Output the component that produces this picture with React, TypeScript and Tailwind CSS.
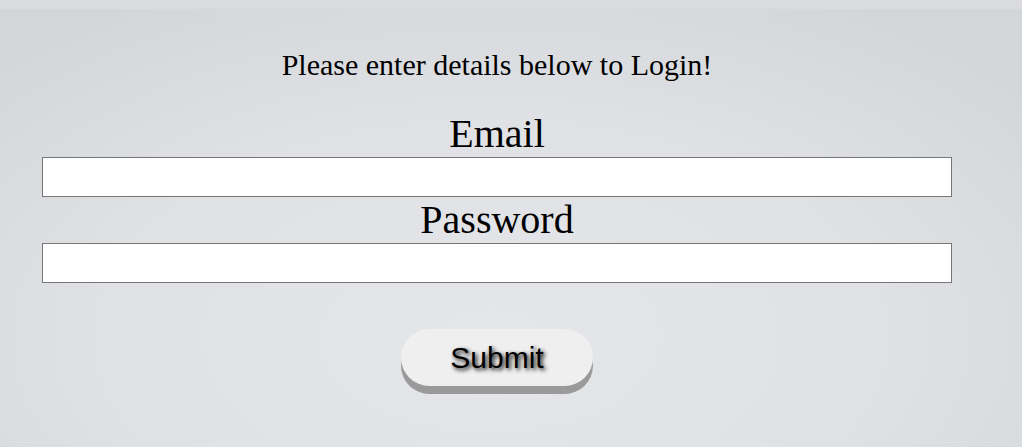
import React from 'react';

export default function App() {
    return (
        <div className="min-h-[447px] bg-[#d3d6d9]" style={{ fontFamily: '"Liberation Serif", "Times New Roman", serif' }}>
            <div className="h-[9px] bg-[#d9dbde]"></div>
            <main className="min-h-[438px] bg-[radial-gradient(ellipse_70%_90%_at_48%_75%,#e4e6e9_0%,#dfe1e4_55%,#d3d6d9_100%)] pl-[42px] pr-[70px] pt-[39px] pb-[40px] text-black">
                <p className="text-center text-[30px] leading-[34px]">Please enter details below to Login!</p>
                <form className="mt-[29px] flex flex-col" onSubmit={(e) => e.preventDefault()}>
                    <label htmlFor="email" className="text-center text-[40px] leading-[46px]">Email</label>
                    <input id="email" type="email" className="h-[40px] w-[910px] border border-[#767676] bg-white px-2 text-[16px] outline-none" />
                    <label htmlFor="password" className="text-center text-[40px] leading-[46px]">Password</label>
                    <input id="password" type="password" className="h-[40px] w-[910px] border border-[#767676] bg-white px-2 text-[16px] outline-none" />
                    <div className="mt-[46px] flex justify-center">
                        <button
                            type="submit"
                            className="h-[57px] w-[192px] rounded-full bg-[#efefef] text-[30px] leading-[34px] text-black shadow-[0_8px_0_#9a9a9a] [text-shadow:2px_2px_4px_#000]"
                            style={{ fontFamily: '"Liberation Sans", Arial, sans-serif' }}
                        >
                            Submit
                        </button>
                    </div>
                </form>
            </main>
        </div>
    );
}
